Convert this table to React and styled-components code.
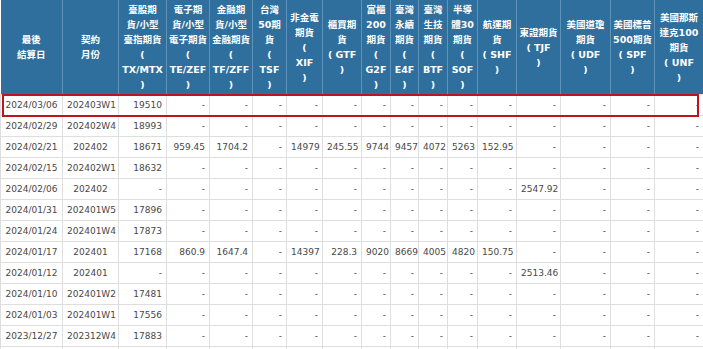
import styled, { createGlobalStyle } from "styled-components";

const GlobalStyle = createGlobalStyle`
  html, body {
    margin: 0;
    padding: 0;
    background: #ffffff;
    overflow: hidden;
  }
  body {
    font-family: "DejaVu Sans", Verdana, "Noto Sans CJK TC", sans-serif;
  }
`;

const columns = [
  { width: 62, head: ["最後", "結算日"], align: "center" },
  { width: 56, head: ["契約", "月份"], align: "center" },
  { width: 48, head: ["臺股期", "貨/小型", "臺指期貨", "(", "TX/MTX", ")"] },
  { width: 43, head: ["電子期", "貨/小型", "電子期貨", "(", "TE/ZEF", ")"] },
  { width: 43, head: ["金融期", "貨/小型", "金融期貨", "(", "TF/ZFF", ")"] },
  { width: 34, head: ["台灣", "50期", "貨", "(", "TSF", ")"] },
  { width: 36, head: ["非金電", "期貨", "(", "XIF", ")"] },
  { width: 39, head: ["櫃買期", "貨", "( GTF", ")"] },
  { width: 29, head: ["富櫃", "200", "期貨", "(", "G2F", ")"] },
  { width: 28, head: ["臺灣", "永續", "期貨", "(", "E4F", ")"] },
  { width: 29, head: ["臺灣", "生技", "期貨", "(", "BTF", ")"] },
  { width: 30, head: ["半導", "體30", "期貨", "(", "SOF", ")"] },
  { width: 39, head: ["航運期", "貨", "( SHF", ")"] },
  { width: 44, head: ["東證期貨", "( TJF", ")"] },
  { width: 50, head: ["美國道瓊", "期貨", "( UDF", ")"] },
  { width: 44, head: ["美國標普", "500期貨", "( SPF", ")"] },
  { width: 49, head: ["美國那斯", "達克100", "期貨", "( UNF", ")"] },
];

const dash = (n) => Array.from({ length: n }, () => "-");

const rows = [
  ["2024/03/06", "202403W1", "19510", ...dash(14)],
  ["2024/02/29", "202402W4", "18993", ...dash(14)],
  ["2024/02/21", "202402", "18671", "959.45", "1704.2", "-", "14979", "245.55", "9744", "9457", "4072", "5263", "152.95", "-", "-", "-", "-"],
  ["2024/02/15", "202402W1", "18632", ...dash(14)],
  ["2024/02/06", "202402", ...dash(11), "2547.92", "-", "-", "-"],
  ["2024/01/31", "202401W5", "17896", ...dash(14)],
  ["2024/01/24", "202401W4", "17873", ...dash(14)],
  ["2024/01/17", "202401", "17168", "860.9", "1647.4", "-", "14397", "228.3", "9020", "8669", "4005", "4820", "150.75", "-", "-", "-", "-"],
  ["2024/01/12", "202401", ...dash(11), "2513.46", "-", "-", "-"],
  ["2024/01/10", "202401W2", "17481", ...dash(14)],
  ["2024/01/03", "202401W1", "17556", ...dash(14)],
  ["2023/12/27", "202312W4", "17883", ...dash(14)],
  Array.from({ length: 17 }, () => ""),
];

const Wrap = styled.div`
  position: relative;
  width: 703px;
`;

const Table = styled.table`
  border-collapse: collapse;
  table-layout: fixed;
  width: 703px;
`;

const HeadCell = styled.th`
  background: #2f6f9d;
  color: #ffffff;
  font-weight: bold;
  font-size: 9.5px;
  line-height: 15px;
  height: 94px;
  padding: 0 1px;
  text-align: center;
  vertical-align: middle;
  white-space: nowrap;
  border-right: 1px solid #5f93bb;
  font-family: "DejaVu Sans", Verdana, "Noto Sans CJK TC", sans-serif;
`;

const Cell = styled.td`
  font-size: 9px;
  color: #484848;
  height: 20px;
  padding: 0 4px;
  text-align: ${(p) => p.$align || "right"};
  vertical-align: middle;
  white-space: nowrap;
  overflow: hidden;
  border: 1px solid #dedede;
`;

const Highlight = styled.div`
  position: absolute;
  left: 2px;
  top: 94px;
  width: 697px;
  height: 23px;
  box-sizing: border-box;
  border: 2px solid #c0141c;
  pointer-events: none;
`;

export default function App() {
  return (
    <>
      <GlobalStyle />
      <Wrap>
        <Table>
          <colgroup>
            {columns.map((c, i) => (
              <col key={i} style={{ width: c.width }} />
            ))}
          </colgroup>
          <thead>
            <tr>
              {columns.map((c, i) => (
                <HeadCell key={i}>
                  {c.head.map((line, j) => (
                    <div key={j}>{line}</div>
                  ))}
                </HeadCell>
              ))}
            </tr>
          </thead>
          <tbody>
            {rows.map((r, i) => (
              <tr key={i}>
                {r.map((v, j) => (
                  <Cell key={j} $align={columns[j].align}>
                    {v}
                  </Cell>
                ))}
              </tr>
            ))}
          </tbody>
        </Table>
        <Highlight />
      </Wrap>
    </>
  );
}
